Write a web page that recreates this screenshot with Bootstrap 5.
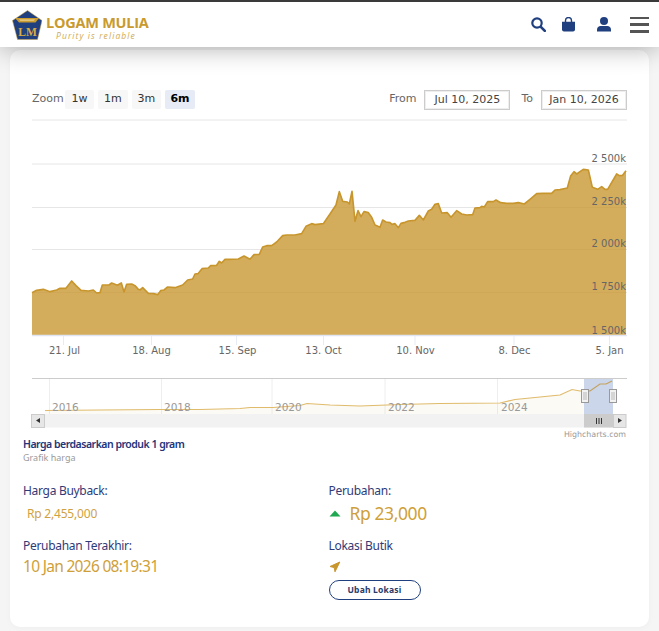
<!DOCTYPE html>
<html lang="id">
<head>
<meta charset="utf-8">
<title>Logam Mulia</title>
<link href="https://cdn.jsdelivr.net/npm/bootstrap@5.3.0/dist/css/bootstrap.min.css" rel="stylesheet">
<style>
html,body{height:631px;overflow:hidden}
body{background:#f5f5f5;font-family:"Noto Sans",sans-serif;color:#2b3a7a}
.lm-top{height:47px;background:#fff;border-top:2px solid #3a3a3a;box-shadow:0 2px 24px rgba(0,0,0,.3);position:relative;z-index:2;padding:0 10px 0 12px}
.lm-brand{font-family:"Open Sans",sans-serif;color:#c99a2e;margin-top:9px;margin-left:4px}
.lm-name{font-size:14.5px;font-weight:700;letter-spacing:-.25px;display:block;line-height:12px}
.lm-tag{font-size:8.5px;font-style:italic;letter-spacing:1.1px;display:block;line-height:10px;margin:2px 0 0 10px;color:#d0ab55}
.lm-logo text{font-family:"Liberation Serif",serif;font-size:11.5px;font-weight:700;fill:#d9ab45}
.lm-gap1{margin-right:16px}
.lm-gap2{margin-right:22px}
.lm-gap3{margin-right:19px}
.lm-burger{width:19px;height:16px;display:flex;flex-direction:column;justify-content:space-between}
.lm-burger span{display:block;height:2.5px;background:#555}
.lm-sheet{margin:3px 10px 0;height:577px;background:#fff;border-radius:10px;padding:39px 13px 0;box-shadow:0 1px 6px rgba(0,0,0,.03)}
.lm-tools{height:21px;padding:0 9px;font-family:"DejaVu Sans",sans-serif;font-size:11px;color:#666}
.lm-range{background:#f7f7f7;border:0;border-radius:2px;color:#333;font-size:11px;height:19px;padding:0;width:29.5px}
.lm-range.lm-on{background:#e6ebf5;color:#000;font-weight:700}
.lm-first{margin-left:1px}
.lm-date{width:86px;height:20px;border:1px solid #ccc;outline:1px solid #eee;outline-offset:-2px;font-size:11px;color:#444;line-height:18px;text-align:center}
.lm-to{margin:0 8px 0 11px}
.lm-chart{display:block;margin-top:9px}
.lm-chart text{font-family:"DejaVu Sans",sans-serif;font-size:10px;fill:#666}
.lm-chart .lm-year{fill:#999;font-size:10.5px}
.lm-chart .lm-credit{fill:#999;font-size:7.9px}
.lm-cap{font-size:10.5px;font-weight:600;color:#23357a;letter-spacing:-.5px;line-height:14px;margin-top:-2px}
.lm-sub{font-size:9px;color:#9a9a9a;line-height:13px;margin-top:0}
.lm-stats{margin-top:18px}
.lm-right{margin-left:-1px}
.lm-lab{font-size:12px;color:#2f3b78;letter-spacing:-.3px;line-height:17px}
.lm-small{font-size:12px;color:#d0a23f;letter-spacing:-.2px;line-height:17px;margin:6px 0 15px 4px}
.lm-big{font-size:17.5px;color:#cf9f3a;letter-spacing:-.4px;line-height:24px}
.lm-when{font-size:15.5px;letter-spacing:-.7px}
.lm-mt2{margin-top:2px}
.lm-mt12{margin-top:12px}
.lm-arrow{margin:7px 0 7px}
.lm-pill{width:92px;height:20px;border:1px solid #1f3f7f;border-radius:10px;background:#fff;font-size:8.5px;font-weight:700;color:#2b3a6a;letter-spacing:.2px;padding:0 0 2px;line-height:15px}
</style>
</head>
<body>
<header class="lm-top d-flex align-items-center justify-content-between">
  <a class="d-flex align-items-center text-decoration-none" href="#">
    <svg class="lm-logo" width="30" height="30" viewBox="0 0 30 30" aria-hidden="true">
      <path d="M15.500 .5 30 10.500 25.500 29.500H5.500L.5 10.500Z" fill="#1f3f7f" stroke="#c9a347" stroke-width=".5"/>
      <path d="M3 8H27L23.500 12.500H7Z" fill="#c99a2e"/>
      <path d="M7 9.300H23L21.800 11H8.300Z" fill="#e2c277"/>
      <text x="15.500" y="25.500" text-anchor="middle">LM</text>
    </svg>
    <span class="lm-brand">
      <span class="lm-name">LOGAM MULIA</span>
      <span class="lm-tag">Purity is reliable</span>
    </span>
  </a>
  <nav class="d-flex align-items-center">
    <svg width="15" height="15" viewBox="0 0 15 15" class="lm-gap1" aria-hidden="true"><circle cx="6" cy="6" r="4.700" fill="none" stroke="#1f3f7f" stroke-width="2.200"/><path d="M9.800 9.800 13.800 13.800" stroke="#1f3f7f" stroke-width="2.600" stroke-linecap="round"/></svg>
    <svg width="13" height="15" viewBox="0 0 13 15" class="lm-gap2" aria-hidden="true"><path d="M3.500 6V3.500a3 3 0 0 1 6 0V6" fill="none" stroke="#1f3f7f" stroke-width="1.400"/><path d="M0 4.800H13V12.500A2 2 0 0 1 11 14.500H2A2 2 0 0 1 0 12.500Z" fill="#1f3f7f"/></svg>
    <svg width="14" height="15" viewBox="0 0 14 15" class="lm-gap3" aria-hidden="true"><circle cx="7" cy="4" r="4" fill="#1f3f7f"/><path d="M0 14.500V12.500C0 10.300 1.800 9 3.500 9H10.500C12.200 9 14 10.300 14 12.500V14.500Z" fill="#1f3f7f"/></svg>
    <span class="lm-burger"><span></span><span></span><span></span></span>
  </nav>
</header>
<main class="lm-sheet">
  <div class="lm-tools d-flex align-items-center">
    <span>Zoom</span>
    <button class="lm-range lm-first" type="button">1w</button>
    <button class="lm-range ms-1" type="button">1m</button>
    <button class="lm-range ms-1" type="button">3m</button>
    <button class="lm-range lm-on ms-1" type="button">6m</button>
    <span class="ms-auto me-2">From</span>
    <span class="lm-date">Jul 10, 2025</span>
    <span class="lm-to">To</span>
    <span class="lm-date">Jan 10, 2026</span>
  </div>
  <svg class="lm-chart" width="613" height="320" viewBox="23 119 613 320" role="img" aria-label="Grafik harga">
    <path d="M32 120H627" stroke="#e6e6e6"/>
    <path d="M32 164H627M32 207.500H627M32 249.500H627M32 292.500H627" stroke="#e6e6e6"/>
    <g transform="translate(0,140) scale(.33333)">
      <path d="M96 458 110 451 130 448 150 455 170 450 180 445 198 445 215 423 228 437 243 451 265 453 280 450 290 459 300 458 307 435 327 435 335 429 352 436 364 429 372 456 380 433 395 432 405 437 415 448 420 450 428 443 445 460 460 461 473 464 482 452 492 450 503 441 525 443 548 435 563 420 578 417 585 402 594 401 606 386 625 384 632 377 650 376 658 364 665 369 675 358 690 358 715 357 732 348 750 358 762 344 778 343 788 321 800 317 815 317 830 306 848 287 860 285 885 285 905 281 918 259 935 251 945 254 970 251 990 222 1008 195 1018 155 1028 184 1042 186 1048 192 1056 154 1065 244 1074 212 1083 230 1092 215 1105 218 1115 232 1125 255 1140 262 1148 240 1158 246 1170 248 1176 253 1185 251 1195 263 1203 250 1215 247 1225 243 1245 241 1258 226 1270 240 1285 213 1295 208 1305 193 1315 191 1325 219 1342 218 1353 232 1370 212 1385 222 1400 225 1418 224 1425 204 1440 203 1445 199 1453 201 1463 185 1480 185 1488 180 1502 188 1520 190 1540 190 1555 188 1573 192 1590 178 1610 161 1630 160 1655 160 1665 150 1680 149 1702 144 1712 108 1722 95 1730 102 1750 88 1765 90 1777 142 1793 148 1805 140 1815 148 1823 148 1850 102 1858 107 1868 106 1878 92" fill="none" stroke="#c8962e" stroke-width="5" stroke-linejoin="round"/>
      <path d="M96 458 110 451 130 448 150 455 170 450 180 445 198 445 215 423 228 437 243 451 265 453 280 450 290 459 300 458 307 435 327 435 335 429 352 436 364 429 372 456 380 433 395 432 405 437 415 448 420 450 428 443 445 460 460 461 473 464 482 452 492 450 503 441 525 443 548 435 563 420 578 417 585 402 594 401 606 386 625 384 632 377 650 376 658 364 665 369 675 358 690 358 715 357 732 348 750 358 762 344 778 343 788 321 800 317 815 317 830 306 848 287 860 285 885 285 905 281 918 259 935 251 945 254 970 251 990 222 1008 195 1018 155 1028 184 1042 186 1048 192 1056 154 1065 244 1074 212 1083 230 1092 215 1105 218 1115 232 1125 255 1140 262 1148 240 1158 246 1170 248 1176 253 1185 251 1195 263 1203 250 1215 247 1225 243 1245 241 1258 226 1270 240 1285 213 1295 208 1305 193 1315 191 1325 219 1342 218 1353 232 1370 212 1385 222 1400 225 1418 224 1425 204 1440 203 1445 199 1453 201 1463 185 1480 185 1488 180 1502 188 1520 190 1540 190 1555 188 1573 192 1590 178 1610 161 1630 160 1655 160 1665 150 1680 149 1702 144 1712 108 1722 95 1730 102 1750 88 1765 90 1777 142 1793 148 1805 140 1815 148 1823 148 1850 102 1858 107 1868 106 1878 92V586H96Z" fill="#c8962e" fill-opacity=".78"/>
    </g>
    <path d="M32 335.500H627" stroke="#dfe5f2" stroke-width="1.500"/>
    <path d="M63.500 336V345M151.500 336V345M236.500 336V345M323.500 336V345M415 336V345M514 336V345M609.500 336V345" stroke="#e6ebf5"/>
    <g text-anchor="end">
      <text x="626" y="162">2 500k</text><text x="626" y="205">2 250k</text><text x="626" y="247">2 000k</text><text x="626" y="290">1 750k</text><text x="626" y="334">1 500k</text>
    </g>
    <g text-anchor="middle">
      <text x="64.500" y="354">21. Jul</text><text x="151.500" y="354">18. Aug</text><text x="237.500" y="354">15. Sep</text><text x="323.500" y="354">13. Oct</text><text x="415.500" y="354">10. Nov</text><text x="514.500" y="354">8. Dec</text><text x="609.500" y="354">5. Jan</text>
    </g>
    <path d="M32 378.500H627" stroke="#ccc"/>
    <path d="M49.500 379V414M161.500 379V414M272 379V414M385 379V414M497.500 379V414" stroke="#eee"/>
    <path d="M45 410.500 100 410 160 409.500 200 409.500 240 408.500 250 407.500 273 407.500 300 405.500 307 403.500 330 405 360 406 400 404.500 440 403.500 500 403 515 399.500 560 395 572 389.500 580 391 590 391 600 384 606 384 612 381V414H45Z" fill="#c8962e" fill-opacity=".05"/>
    <path d="M45 410.500 100 410 160 409.500 200 409.500 240 408.500 250 407.500 273 407.500 300 405.500 307 403.500 330 405 360 406 400 404.500 440 403.500 500 403 515 399.500 560 395 572 389.500 580 391 590 391 600 384 606 384 612 381" fill="none" stroke="#e0bb6b" stroke-width="1.200"/>
    <rect x="584" y="379" width="29" height="35" fill="#ccd6eb"/>
    <path d="M584 391 590 391 600 384 606 384 612 381" fill="none" stroke="#c3a25a" stroke-width="1.200"/>
    <g fill="#f2f2f2" stroke="#999"><rect x="581.500" y="389.500" width="7" height="13"/><rect x="609.500" y="389.500" width="7" height="13"/></g>
    <path d="M584 392V400M586 392V400M612 392V400M614 392V400" stroke="#aaa" stroke-width=".8"/>
    <text class="lm-year" x="52" y="411">2016</text><text class="lm-year" x="164" y="411">2018</text><text class="lm-year" x="275" y="411">2020</text><text class="lm-year" x="388" y="411">2022</text><text class="lm-year" x="501" y="411">2024</text>
    <rect x="32" y="414" width="594" height="13.500" fill="#f2f2f2"/>
    <rect x="584" y="414" width="29" height="13.500" fill="#ccc"/>
    <rect x="31.500" y="414.500" width="13" height="13" fill="#e6e6e6" stroke="#ccc"/>
    <rect x="613.500" y="414.500" width="12.500" height="13" fill="#e6e6e6" stroke="#ccc"/>
    <path d="M40 418V423L36 420.500ZM618 418V423L622 420.500Z" fill="#333"/>
    <path d="M596.500 418V424M599 418V424M601.500 418V424" stroke="#333"/>
    <text class="lm-credit" x="626" y="437" text-anchor="end">Highcharts.com</text>
  </svg>
  <div class="lm-cap">Harga berdasarkan produk 1 gram</div>
  <div class="lm-sub">Grafik harga</div>
  <div class="row g-0 lm-stats">
    <div class="col-6">
      <div class="lm-lab">Harga Buyback:</div>
      <div class="lm-small">Rp 2,455,000</div>
      <div class="lm-lab">Perubahan Terakhir:</div>
      <div class="lm-big lm-when">10 Jan 2026 08:19:31</div>
    </div>
    <div class="col-6">
      <div class="lm-right">
        <div class="lm-lab">Perubahan:</div>
        <div class="lm-big d-flex align-items-center lm-mt2">
          <svg width="13" height="7" viewBox="0 0 13 7" class="me-2" aria-hidden="true"><path d="M6 .5 11.500 6.500H.5Z" fill="#1ea84f"/></svg>
          <span>Rp 23,000</span>
        </div>
        <div class="lm-lab lm-mt12">Lokasi Butik</div>
        <svg width="12" height="12" viewBox="0 0 12 12" class="d-block lm-arrow" aria-hidden="true"><path d="M10.800 1 6 10.800 5.200 6.600 1 5.500Z" fill="#c8962e" stroke="#c8962e" stroke-width="1" stroke-linejoin="round"/></svg>
        <button class="lm-pill d-block" type="button">Ubah Lokasi</button>
      </div>
    </div>
  </div>
</main>
<script src="https://cdn.jsdelivr.net/npm/bootstrap@5.3.0/dist/js/bootstrap.bundle.min.js"></script>
</body>
</html>
